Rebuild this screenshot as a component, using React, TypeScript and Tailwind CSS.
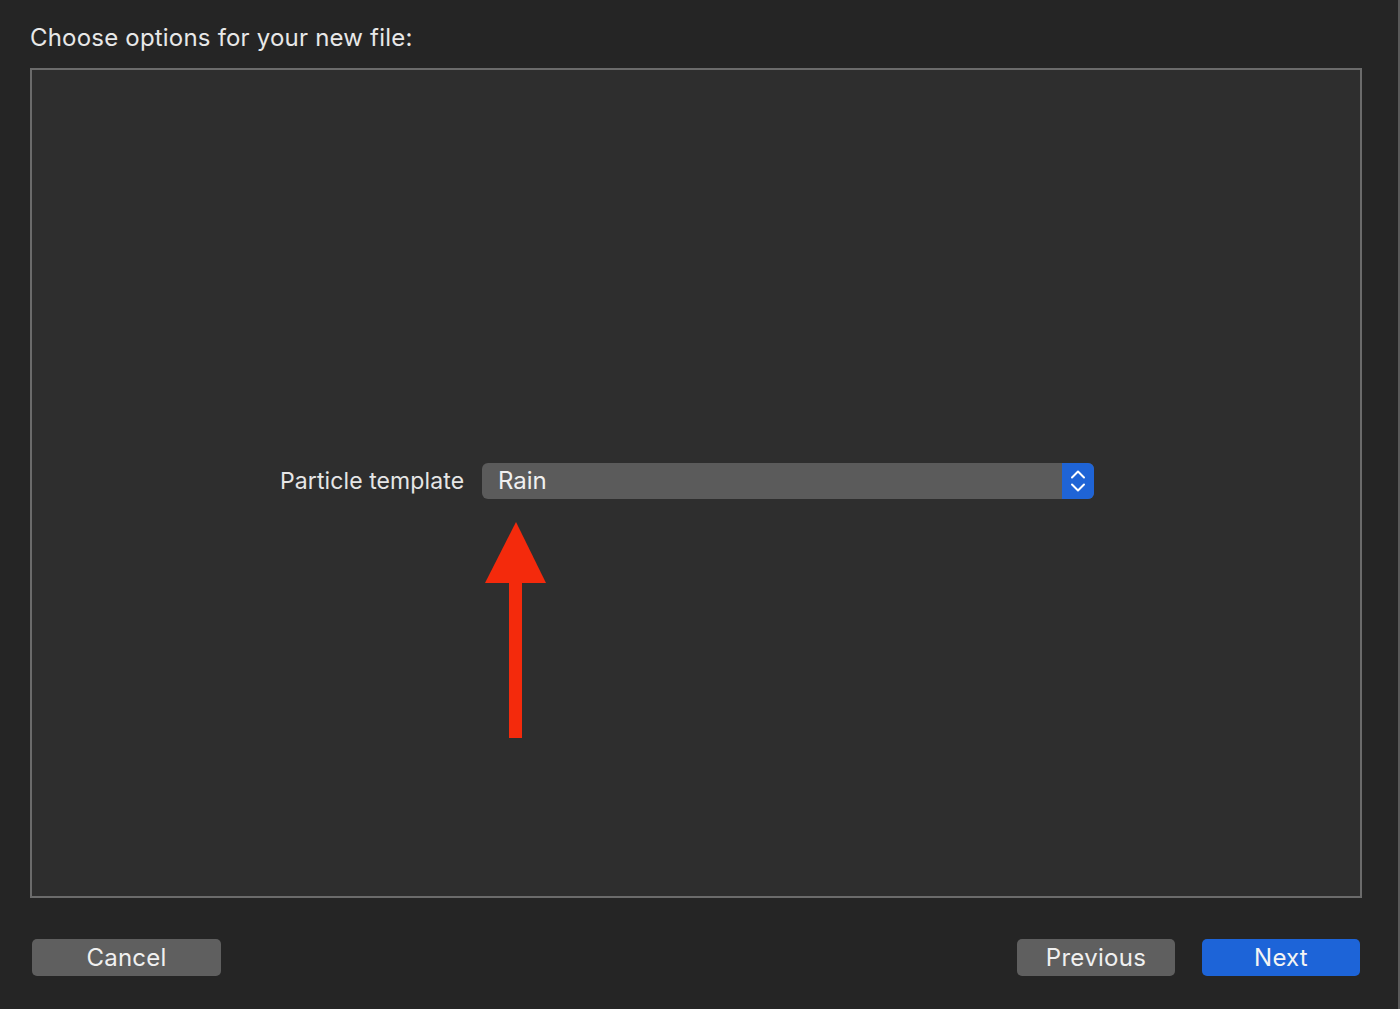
import React from "react";

function Stepper() {
  return (
    <svg viewBox="0 0 32 36" className="h-[36px] w-[32px]" fill="none">
      <path d="M10 14.5 L16 8.5 L22 14.5" stroke="white" strokeWidth="2" strokeLinecap="round" strokeLinejoin="round" />
      <path d="M10 21.5 L16 27.5 L22 21.5" stroke="white" strokeWidth="2" strokeLinecap="round" strokeLinejoin="round" />
    </svg>
  );
}

function RedArrow() {
  return (
    <svg viewBox="0 0 62 218" className="h-[218px] w-[62px]">
      <polygon points="31,0 61,61 0,61" fill="#f42a0c" />
      <rect x="24" y="60" width="13" height="156" fill="#f42a0c" />
    </svg>
  );
}

export default function App() {
  return (
    <div
      className="flex h-[1009px] w-[1400px] flex-col bg-[#252525] text-[#e6e6e6]"
      style={{ fontFamily: "Inter, 'Open Sans', sans-serif" }}
    >
      <div className="flex flex-1 flex-col border-r-2 border-[#5a5a5a] pl-[30px] pr-[36px]">
        <h1 className="mt-[22px] h-[32px] text-[24px] leading-[32px] tracking-[0.2px] text-[#e8e8e8]">
          Choose options for your new file:
        </h1>

        <div className="mt-[14px] flex h-[830px] flex-col border-2 border-[#6b6b6b] bg-[#2e2e2e]">
          <div className="ml-[248px] mt-[393px] flex items-center">
            <span className="w-[184px] whitespace-nowrap text-right text-[23px] tracking-[0.1px] text-[#e6e6e6]">
              Particle template
            </span>
            <div className="ml-[18px] flex h-[36px] w-[612px] items-center overflow-hidden rounded-[6px] bg-[#5b5b5b]">
              <span className="flex-1 pl-[16px] text-[24px] text-[#f0f0f0]">Rain</span>
              <div className="flex h-[36px] w-[32px] items-center justify-center bg-[#1f64d6]">
                <Stepper />
              </div>
            </div>
          </div>
          <div className="ml-[453px] mt-[23px]">
            <RedArrow />
          </div>
        </div>

        <div className="mt-[41px] flex items-center">
          <button className="ml-[2px] h-[37px] w-[189px] rounded-[5px] bg-[#5f5f5f] text-[24px] tracking-[0.2px] text-[#f0f0f0]">
            Cancel
          </button>
          <div className="flex-1" />
          <button className="h-[37px] w-[158px] rounded-[5px] bg-[#5f5f5f] text-[24px] tracking-[0.3px] text-[#f0f0f0]">
            Previous
          </button>
          <button className="mr-[2px] ml-[27px] h-[37px] w-[158px] rounded-[5px] bg-[#1d64d8] text-[24px] tracking-[0.2px] text-[#f4f4f4]">
            Next
          </button>
        </div>
      </div>
    </div>
  );
}
